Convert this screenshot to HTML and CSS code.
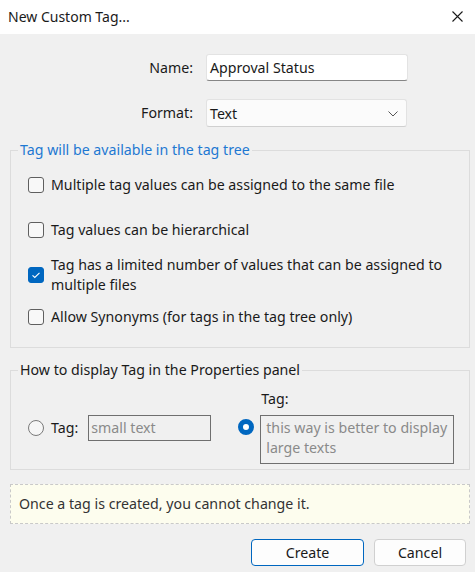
FILE: index.html
```html
<!DOCTYPE html>
<html>
<head>
<meta charset="utf-8">
<link rel="stylesheet" href="styles.css">
</head>
<body>
<div class="window">
  <div class="titlebar">
    <span class="title">New Custom Tag...</span>
    <svg class="close" width="11" height="11" viewBox="0 0 11 11"><path d="M0.5 0.5 L10.5 10.5 M10.5 0.5 L0.5 10.5" stroke="#1a1a1a" stroke-width="1.1" fill="none"/></svg>
  </div>
  <div class="content">
    <div class="form-row name-row">
      <label class="form-label">Name:</label>
      <div class="textfield">Approval Status</div>
    </div>
    <div class="form-row format-row">
      <label class="form-label">Format:</label>
      <div class="select">
        <span>Text</span>
        <svg class="chevron" width="10" height="6" viewBox="0 0 10 6"><path d="M0.5 0.5 L5 5 L9.5 0.5" stroke="#555" stroke-width="1" fill="none"/></svg>
      </div>
    </div>

    <fieldset class="group group-tree">
      <legend class="legend legend-blue">Tag will be available in the tag tree</legend>
      <div class="check-row row1">
        <span class="checkbox"></span>
        <span class="check-text">Multiple tag values can be assigned to the same file</span>
      </div>
      <div class="check-row row2">
        <span class="checkbox"></span>
        <span class="check-text">Tag values can be hierarchical</span>
      </div>
      <div class="check-row row3">
        <span class="checkbox checked"><svg width="16" height="16" viewBox="0 0 16 16"><path d="M4.5 8.3 L6.8 10.5 L11.5 5.8" stroke="#fff" stroke-width="1.1" fill="none"/></svg></span>
        <span class="check-text">Tag has a limited number of values that can be assigned to multiple files</span>
      </div>
      <div class="check-row row4">
        <span class="checkbox"></span>
        <span class="check-text">Allow Synonyms (for tags in the tag tree only)</span>
      </div>
    </fieldset>

    <fieldset class="group group-display">
      <legend class="legend">How to display Tag in the Properties panel</legend>
      <div class="display">
        <div class="opt opt-small">
          <span class="radio"></span>
          <span class="opt-label">Tag:</span>
          <div class="sample-small">small text</div>
        </div>
        <div class="opt-large">
          <div class="cap">Tag:</div>
          <div class="opt opt-large-row">
            <span class="radio selected"></span>
            <div class="sample-large">this way is better to display large texts</div>
          </div>
        </div>
      </div>
    </fieldset>

    <div class="info">Once a tag is created, you cannot change it.</div>

    <div class="buttons">
      <button class="btn btn-primary">Create</button>
      <button class="btn btn-cancel">Cancel</button>
    </div>
  </div>
</div>
</body>
</html>
```

FILE: styles.css
```css
* { box-sizing: border-box; }
html, body { margin: 0; padding: 0; }
body {
  background: #f0f0f0;
  font-family: "Noto Sans", "Open Sans", sans-serif;
  font-size: 14.2px;
  line-height: 20px;
  color: #1a1a1a;
  width: 475px;
  height: 572px;
  overflow: hidden;
}
.titlebar {
  height: 34px;
  background: #ffffff;
  display: flex;
  align-items: center;
  justify-content: space-between;
  padding: 0 12px 0 8px;
}
.title { font-size: 14px; }
.close { display: block; margin-top: -2px; }

.content { padding: 0 5px 0 10px; }

.form-row { display: flex; align-items: center; }
.form-label { width: 183px; text-align: right; margin-right: 13px; }
.name-row { margin-top: 20px; }
.format-row { margin-top: 18px; }
.textfield {
  width: 202px; height: 27px;
  background: #fff;
  border: 1px solid #e3e3e3;
  border-bottom-color: #868686;
  border-radius: 3px;
  padding: 2px 3px;
  line-height: 21px;
}
.select {
  width: 201px; height: 28px;
  background: #fbfbfb;
  border: 1px solid #e2e2e2;
  border-bottom-color: #d0d0d0;
  border-radius: 3px;
  padding: 3px 3px;
  line-height: 21px;
  display: flex;
  align-items: center;
  justify-content: space-between;
}
.chevron { margin-right: 5px; margin-top: 1px; }

.group {
  margin: 0;
  border: 1px solid #dcdcdc;
  padding: 0;
  min-width: 0;
}
.legend {
  margin-left: -10px;
  padding: 0 2px;
  line-height: 20px;
}
.legend-blue { color: #1e78d2; }
.group-tree { margin-top: 13px; padding: 15px 0 20px 17px; }

.check-row { display: flex; align-items: center; }
.checkbox {
  flex: none;
  width: 16px; height: 16px;
  border: 1px solid #5f5f5f;
  border-radius: 3px;
  background: #f8f8f8;
  margin-right: 7px;
  display: flex;
}
.checkbox.checked { background: #0067c0; border-color: #0067c0; }
.checkbox svg { margin: -1px; }
.check-text { padding-right: 20px; }
.row2 { margin-top: 25px; }
.row3 { margin-top: 15px; }
.row4 { margin-top: 12px; }

.group-display { margin-top: 12px; padding: 9px 0 5px 17px; }
.display { display: flex; align-items: flex-start; }
.opt { display: flex; align-items: center; }
.opt-small { margin-top: 26px; }
.radio {
  flex: none;
  width: 16px; height: 16px;
  border: 1px solid #7a7a7a;
  border-radius: 50%;
  background: #f6f6f6;
}
.radio.selected { border: 5px solid #0067c0; background: #fff; }
.opt-label { margin-left: 7px; margin-right: 10px; }
.sample-small, .sample-large {
  border: 1px solid #6f6f6f;
  color: #8a8a8a;
  padding: 2px 5px;
  line-height: 20px;
}
.sample-small { width: 123px; height: 26px; padding-top: 2px; padding-left: 2px; }
.opt-large { margin-left: 27px; }
.cap { margin-left: 23px; margin-bottom: 6px; }
.opt-large-row { align-items: flex-start; }
.opt-large-row .radio { margin-top: 4px; margin-right: 6px; }
.sample-large { width: 194px; height: 49px; }

.info {
  margin-top: 14px;
  height: 40px;
  border: 1px dashed #c9c9c9;
  background: #fdfdee;
  padding: 9px 8px;
  color: #333;
}

.buttons {
  display: flex;
  justify-content: flex-end;
  gap: 10px;
  margin-top: 15px;
  padding-right: 4px;
}
.btn {
  font-family: inherit;
  font-size: 14.2px;
  height: 27px;
  border-radius: 4px;
  background: #fdfdfd;
  color: #1a1a1a;
  padding: 0;
  line-height: 20px;
}
.btn-primary { width: 113px; border: 1px solid #0067c0; }
.btn-cancel { width: 92px; border: 1px solid #d0d0d0; }
```
